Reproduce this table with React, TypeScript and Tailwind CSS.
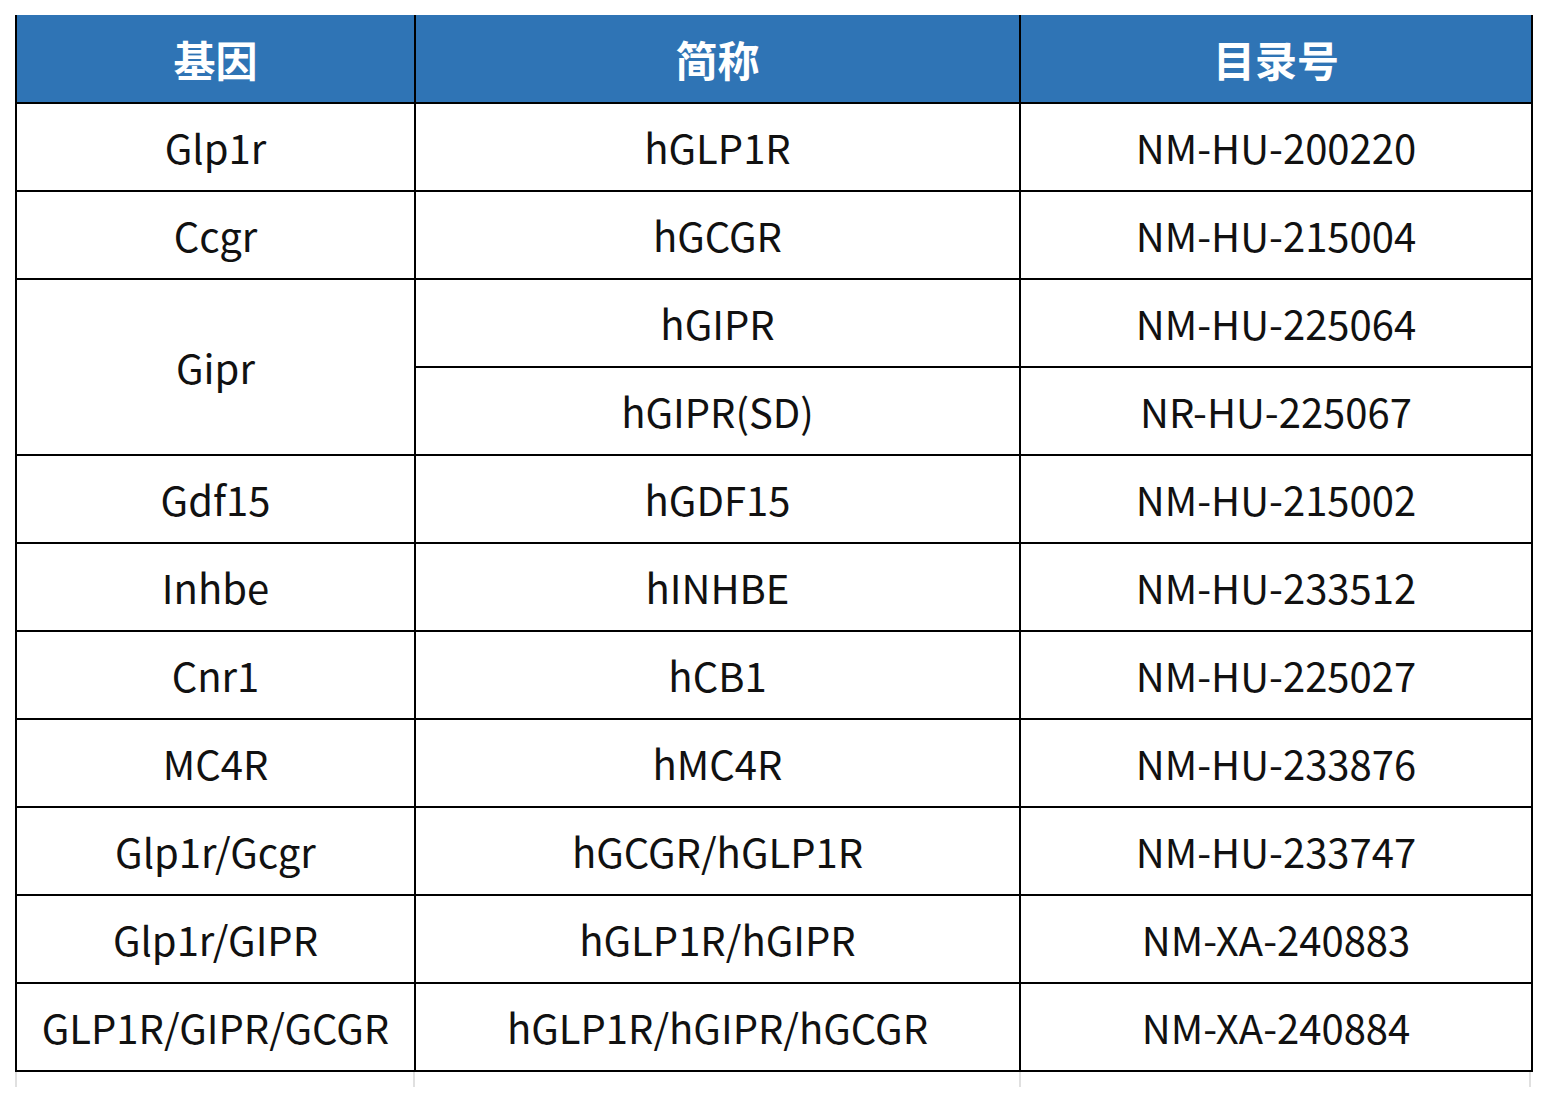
import React from "react";

type Row = { gene?: string; span?: number; abbr: string; code: string };

const rows: Row[] = [
  { gene: "Glp1r", abbr: "hGLP1R", code: "NM-HU-200220" },
  { gene: "Ccgr", abbr: "hGCGR", code: "NM-HU-215004" },
  { gene: "Gipr", span: 2, abbr: "hGIPR", code: "NM-HU-225064" },
  { abbr: "hGIPR(SD)", code: "NR-HU-225067" },
  { gene: "Gdf15", abbr: "hGDF15", code: "NM-HU-215002" },
  { gene: "Inhbe", abbr: "hINHBE", code: "NM-HU-233512" },
  { gene: "Cnr1", abbr: "hCB1", code: "NM-HU-225027" },
  { gene: "MC4R", abbr: "hMC4R", code: "NM-HU-233876" },
  { gene: "Glp1r/Gcgr", abbr: "hGCGR/hGLP1R", code: "NM-HU-233747" },
  { gene: "Glp1r/GIPR", abbr: "hGLP1R/hGIPR", code: "NM-XA-240883" },
  { gene: "GLP1R/GIPR/GCGR", abbr: "hGLP1R/hGIPR/hGCGR", code: "NM-XA-240884" },
];

export default function App() {
  return (
    <div
      className="min-h-[1103px] w-[1546px] bg-white pt-[15px] pl-[15px]"
      style={{ fontFamily: '"Noto Sans CJK SC", "Noto Sans", sans-serif' }}
    >
      <table className="table-fixed border-collapse w-[1516px] text-[#111]">
        <colgroup>
          <col className="w-[399px]" />
          <col className="w-[605px]" />
          <col className="w-[512px]" />
        </colgroup>
        <thead>
          <tr className="h-[88px]">
            {["基因", "简称", "目录号"].map((h) => (
              <th
                key={h}
                className="border-x-2 border-b-2 border-black bg-[#2f74b5] p-0 text-center text-[42px] font-bold text-white leading-none"
              >
                {h}
              </th>
            ))}
          </tr>
        </thead>
        <tbody>
          {rows.map((r, i) => (
            <tr key={i} className="h-[88px]">
              {r.gene !== undefined && (
                <td
                  rowSpan={r.span ?? 1}
                  className="border-2 border-black p-0 text-center text-[40px] font-normal leading-none"
                >
                  {r.gene}
                </td>
              )}
              <td className="border-2 border-black p-0 text-center text-[40px] font-normal leading-none">
                {r.abbr}
              </td>
              <td className="border-2 border-black p-0 text-center text-[40px] font-normal leading-none">
                {r.code}
              </td>
            </tr>
          ))}
        </tbody>
      </table>
      <div className="flex h-[15px] w-[1516px]">
        <div className="w-[2px] bg-[#e0e0e0]" />
        <div className="w-[396px]" />
        <div className="w-[2px] bg-[#e0e0e0]" />
        <div className="w-[604px]" />
        <div className="w-[2px] bg-[#e0e0e0]" />
        <div className="w-[508px]" />
        <div className="w-[2px] bg-[#e0e0e0]" />
      </div>
    </div>
  );
}
